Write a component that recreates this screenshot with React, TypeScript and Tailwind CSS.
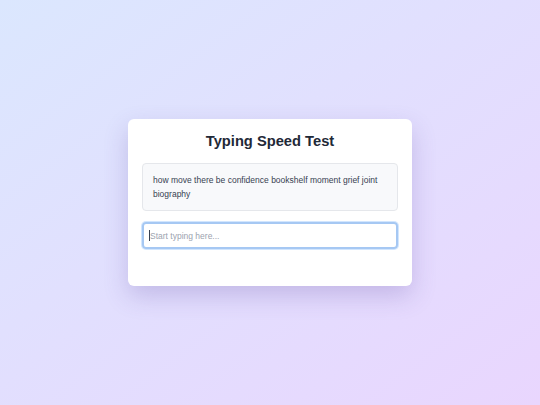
import React from "react";

export default function App() {
  return (
    <div
      className="min-h-screen w-full flex items-center justify-center bg-linear-to-br from-[#dbe7fe] to-[#e9d6fe]"
      style={{ fontFamily: '"Liberation Sans", Arial, Helvetica, sans-serif' }}
    >
      <div className="w-[284px] bg-white rounded-[6px] px-[14px] pt-[12px] pb-[14px] shadow-[0_10px_24px_rgba(90,70,160,0.24)]">
        <h1 className="text-center text-[14.7px] leading-[20px] font-bold text-[#1f2937] mb-[12px]">
          Typing Speed Test
        </h1>
        <div className="border border-[#e5e7eb] bg-[#f8f9fb] rounded-[4px] px-[10px] py-[9px] text-[8.5px] leading-[14px] text-[#374151]">
          how move there be confidence bookshelf moment grief joint biography
        </div>
        <div className="relative mt-[11px]">
          <input
            autoFocus
            type="text"
            placeholder="Start typing here..."
            className="block w-full h-[27px] border-2 border-[#a6c8f3] rounded-[4px] pl-[6px] pr-[5px] text-[8.5px] text-[#374151] placeholder:text-[#9ca3af] outline-none shadow-[0_0_0_1px_rgba(191,219,254,0.7)] caret-transparent"
            style={{ fontFamily: '"Liberation Sans", Arial, Helvetica, sans-serif' }}
          />
          <span className="pointer-events-none absolute left-[7px] top-[8px] h-[11px] w-px bg-[#374151]" />
        </div>
        <div className="h-[23px]" />
      </div>
    </div>
  );
}
